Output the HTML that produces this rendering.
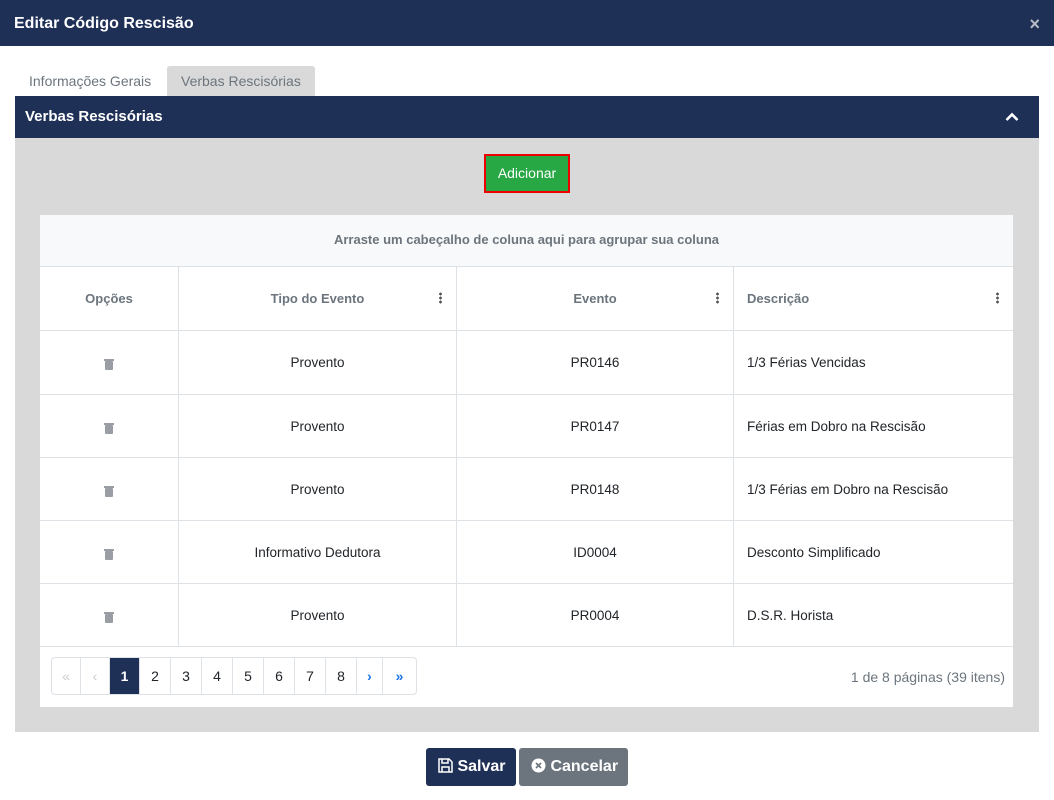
<!DOCTYPE html>
<html><head><meta charset="utf-8"><style>
*{box-sizing:border-box;margin:0;padding:0}
body{width:1054px;height:800px;background:#fff;font-family:"Liberation Sans",Arial,sans-serif;position:relative;overflow:hidden;color:#212529}
.abs{position:absolute}
.hdr{left:0;top:0;width:1054px;height:46px;background:#1f3057;color:#fff;font-weight:bold;font-size:16px;padding:15px 14px}
.x{right:14px;top:14px;color:#b8bcc6;font-size:18px;font-weight:bold}
.tab{top:66px;height:30px;font-size:14px;color:#6c757d;padding:7px 14px}
.ph{left:15px;top:96px;width:1024px;height:42px;background:#1f3057;color:#fff;font-weight:bold;font-size:15px;padding:12px 10px}
.body{left:15px;top:138px;width:1024px;height:594px;background:#d9d9d9}
.add{left:484px;top:154px;width:86px;height:39px;border:2px solid #e00;background:#28a745;color:#fff;font-size:14px;text-align:center;line-height:35px}
.tbl{left:40px;top:215px;width:973px;height:492px;background:#fff}
.grp{left:40px;top:215px;width:973px;height:52px;background:#f8f9fa;border-bottom:1px solid #dee2e6;text-align:center;line-height:50px;font-size:13px;color:#6c757d;font-weight:bold}
.row{left:40px;width:973px;border-bottom:1px solid #dee2e6;font-size:13.5px}
.c{position:absolute;top:0;height:100%;display:flex;align-items:center;border-right:1px solid #dee2e6}
.c1{left:0;width:139px;justify-content:center}
.c2{left:139px;width:278px;justify-content:center}
.c3{left:417px;width:277px;justify-content:center}
.c4{left:694px;width:279px;padding-left:13px;border-right:none}
.th{color:#6c757d;font-weight:bold;font-size:13px}
.dots{position:absolute;right:14px;top:25px;width:3px;height:12px;background:radial-gradient(circle,#555 1.3px,transparent 1.5px) 0 0/3px 4px repeat-y}
.trash{width:8px;height:9px;background:#9a9ea4;border-radius:1px;position:relative;margin-top:6px}
.trash:before{content:"";position:absolute;left:-1px;top:-2px;width:10px;height:2px;background:#9a9ea4}
.pg{left:51px;top:657px;height:38px;border:1px solid #dee2e6;border-radius:4px;display:flex;overflow:hidden}
.pg div{width:31px;height:36px;line-height:36px;text-align:center;font-size:14px;border-right:1px solid #dee2e6}
.pg div:last-child{border-right:none}
.btn{top:748px;height:38px;border-radius:3px;color:#fff;font-weight:bold;font-size:16px;line-height:38px}
</style></head><body>
<div class="abs hdr">Editar Código Rescisão</div>
<div class="abs x">×</div>
<div class="abs tab" style="left:15px">Informações Gerais</div>
<div class="abs tab" style="left:167px;width:148px;background:#d9d9d9;border-radius:3px 3px 0 0">Verbas Rescisórias</div>
<div class="abs ph">Verbas Rescisórias
<svg class="abs" style="right:20px;top:16px" width="14" height="10" viewBox="0 0 14 10"><path d="M1.5 8 L7 2.5 L12.5 8" stroke="#fff" stroke-width="2.6" fill="none"/></svg></div>
<div class="abs body"></div>
<div class="abs add">Adicionar</div>
<div class="abs tbl"></div>
<div class="abs grp">Arraste um cabeçalho de coluna aqui para agrupar sua coluna</div>
<div class="abs row th" style="top:267px;height:64px"><div class="c c1">Opções</div><div class="c c2">Tipo do Evento<span class="dots"></span></div><div class="c c3">Evento<span class="dots"></span></div><div class="c c4">Descrição<span class="dots"></span></div></div>
<div class="abs row" style="top:331px;height:64px"><div class="c c1"><span class="trash"></span></div><div class="c c2">Provento</div><div class="c c3">PR0146</div><div class="c c4">1/3 Férias Vencidas</div></div>
<div class="abs row" style="top:395px;height:63px"><div class="c c1"><span class="trash"></span></div><div class="c c2">Provento</div><div class="c c3">PR0147</div><div class="c c4">Férias em Dobro na Rescisão</div></div>
<div class="abs row" style="top:458px;height:63px"><div class="c c1"><span class="trash"></span></div><div class="c c2">Provento</div><div class="c c3">PR0148</div><div class="c c4">1/3 Férias em Dobro na Rescisão</div></div>
<div class="abs row" style="top:521px;height:63px"><div class="c c1"><span class="trash"></span></div><div class="c c2">Informativo Dedutora</div><div class="c c3">ID0004</div><div class="c c4">Desconto Simplificado</div></div>
<div class="abs row" style="top:584px;height:63px"><div class="c c1"><span class="trash"></span></div><div class="c c2">Provento</div><div class="c c3">PR0004</div><div class="c c4">D.S.R. Horista</div></div>
<div class="abs pg"><div style="color:#ccc;width:29px">«</div><div style="color:#ccc;width:29px">‹</div><div style="background:#1f3057;color:#fff;font-weight:bold;width:30px">1</div><div>2</div><div>3</div><div>4</div><div>5</div><div>6</div><div>7</div><div>8</div><div style="color:#1a73e8;font-weight:bold;width:26px">›</div><div style="color:#1a73e8;font-weight:bold;width:33px">»</div></div>
<div class="abs" style="right:49px;top:669px;font-size:14px;color:#6c757d">1 de 8 páginas (39 itens)</div>
<div class="abs btn" style="left:426px;width:90px;background:#1f3057;padding-left:12px">
<svg style="vertical-align:-2px" width="15" height="15" viewBox="0 0 15 15"><path d="M1 1h10l3 3v10H1z M4 1v4h6V1 M4 14v-5h7v5" stroke="#fff" stroke-width="1.5" fill="none"/></svg> Salvar</div>
<div class="abs btn" style="left:519px;width:109px;background:#6c757d;padding-left:12px">
<svg style="vertical-align:-2px" width="15" height="15" viewBox="0 0 15 15"><circle cx="7.5" cy="7.5" r="7" fill="#fff"/><path d="M5 5l5 5M10 5l-5 5" stroke="#6c757d" stroke-width="1.6"/></svg> Cancelar</div>
</body></html>
